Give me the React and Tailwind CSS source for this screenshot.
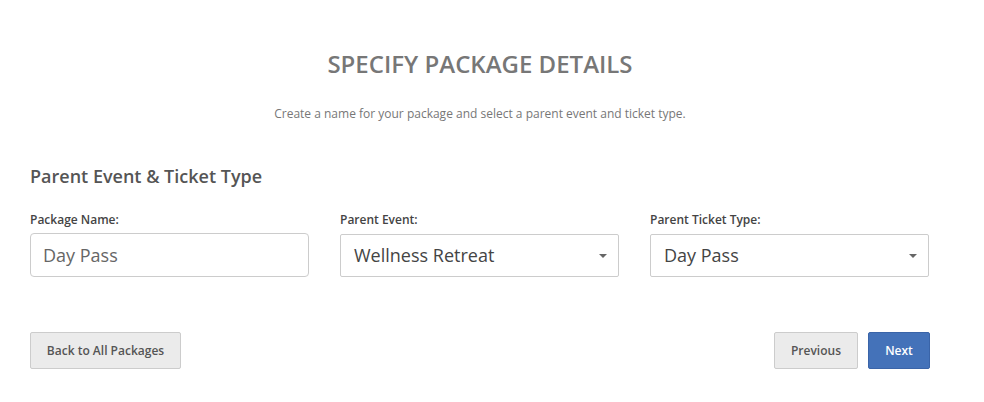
import React from "react";

function Caret() {
  return (
    <svg width="8" height="4" viewBox="0 0 8 4" className="shrink-0">
      <path d="M0 0 L8 0 L4 4 Z" fill="#666" />
    </svg>
  );
}

export default function App() {
  return (
    <div className="w-[984px] h-[402px] bg-white overflow-hidden" style={{ fontFamily: '"Open Sans", sans-serif' }}>
      <div className="pt-[48px] w-[960px] flex flex-col items-center">
        <h1 className="text-[24px] leading-[32px] font-semibold text-[#777] tracking-[0px]">SPECIFY PACKAGE DETAILS</h1>
        <p className="mt-[26px] text-[12px] leading-[16px] text-[#777]">Create a name for your package and select a parent event and ticket type.</p>
      </div>
      <div className="px-[30px]">
        <h2 className="mt-[42px] text-[18px] leading-[24px] font-semibold text-[#555]">Parent Event &amp; Ticket Type</h2>
        <div className="mt-[24px] grid grid-cols-[279px_279px_279px] gap-x-[31px]">
          <div className="flex flex-col">
            <label className="text-[12px] leading-[16px] font-semibold text-[#444]">Package Name:</label>
            <div className="mt-[5px] h-[44px] border border-[#ccc] rounded-[4px] flex items-center px-[12px] text-[18px] text-[#666]">Day Pass</div>
          </div>
          <div className="flex flex-col">
            <label className="text-[12px] leading-[16px] font-semibold text-[#444]">Parent Event:</label>
            <div className="mt-[6px] h-[43px] border border-[#ccc] rounded-[2px] flex items-center justify-between pl-[13px] pr-[11px] text-[18px] text-[#444]">
              <span>Wellness Retreat</span>
              <Caret />
            </div>
          </div>
          <div className="flex flex-col">
            <label className="text-[12px] leading-[16px] font-semibold text-[#444]">Parent Ticket Type:</label>
            <div className="mt-[6px] h-[43px] border border-[#ccc] rounded-[2px] flex items-center justify-between pl-[13px] pr-[11px] text-[18px] text-[#444]">
              <span>Day Pass</span>
              <Caret />
            </div>
          </div>
        </div>
        <div className="mt-[55px] flex items-center w-[900px]">
          <button className="h-[37px] w-[151px] bg-[#ebebeb] border border-[#ccc] rounded-[2px] text-[12px] font-semibold text-[#555]">Back to All Packages</button>
          <div className="ml-auto flex gap-[10px]">
            <button className="h-[37px] w-[84px] bg-[#ebebeb] border border-[#ccc] rounded-[2px] text-[12px] font-semibold text-[#555]">Previous</button>
            <button className="h-[37px] w-[62px] bg-[#4472b9] border border-[#3a64a8] rounded-[2px] text-[12px] font-semibold text-white">Next</button>
          </div>
        </div>
      </div>
    </div>
  );
}
